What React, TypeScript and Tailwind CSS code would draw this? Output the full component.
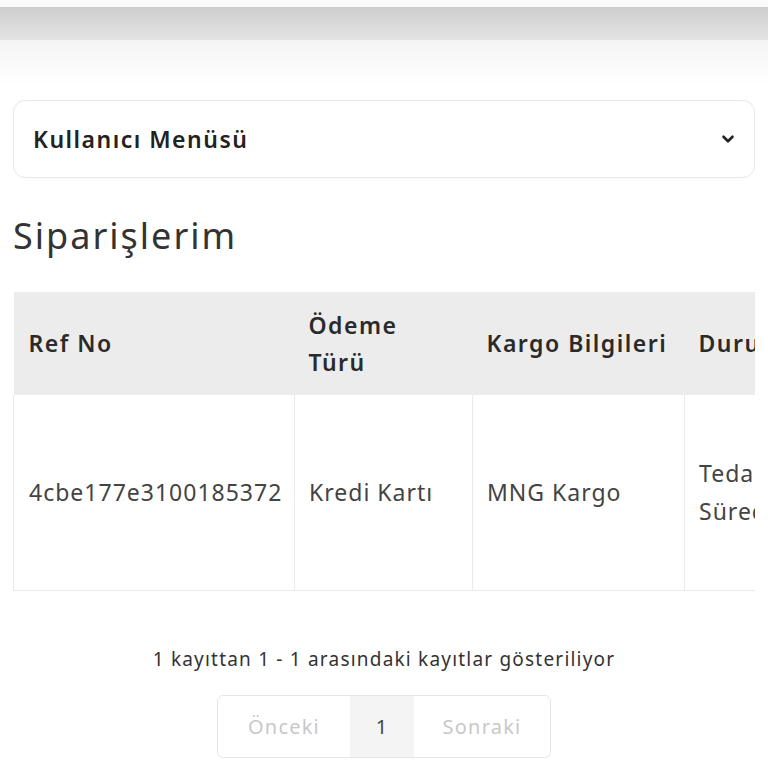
import { ChevronDown } from "lucide-react";

const font = { fontFamily: '"Noto Sans", "Open Sans", sans-serif' };

export default function App() {
  return (
    <div className="min-h-[768px] w-[768px] bg-white text-[#333]" style={font}>
      <div className="h-[7px] bg-[#fafafa]" />
      <div className="h-[33px] bg-gradient-to-b from-[#cdcdcd] to-[#e4e4e4]" />
      <div className="h-[45px] bg-gradient-to-b from-[#f4f4f4] to-white" />

      <div className="mx-[13px] mt-[15px] flex h-[78px] items-center justify-between rounded-[12px] border border-[#e8e8e8] pr-[17px] pl-[19px]">
        <span className="text-[23px] font-semibold tracking-[1.5px] text-[#222]">Kullanıcı Menüsü</span>
        <ChevronDown className="h-[18px] w-[18px] text-[#222]" strokeWidth={3.5} />
      </div>

      <h1 className="mx-[13px] mt-[36px] text-[36px] leading-[44px] font-normal tracking-[2px] text-[#333]">Siparişlerim</h1>

      <div className="mx-[13px] mt-[34px] overflow-hidden">
        <table className="w-[1100px] table-fixed border-collapse text-left">
          <colgroup>
            <col className="w-[281px]" />
            <col className="w-[178px]" />
            <col className="w-[212px]" />
            <col className="w-[150px]" />
            <col className="w-[279px]" />
          </colgroup>
          <thead>
            <tr className="h-[103px] bg-[#ececec] text-[23px] leading-[37px] tracking-[1.5px] text-[#2a2a2a]">
              <th className="px-[15px] font-semibold">Ref No</th>
              <th className="px-[14px] font-semibold">Ödeme Türü</th>
              <th className="px-[14px] font-semibold">Kargo Bilgileri</th>
              <th className="px-[14px] font-semibold">Durum</th>
              <th className="px-[14px] font-semibold">Tutar</th>
            </tr>
          </thead>
          <tbody>
            <tr className="h-[195px] border-b border-[#eaeaea] text-[23px] leading-[38px] tracking-[1px] text-[#444]">
              <td className="border-l border-[#eaeaea] px-[15px]">4cbe177e3100185372</td>
              <td className="border-l border-[#eaeaea] px-[14px]">Kredi Kartı</td>
              <td className="border-l border-[#eaeaea] px-[14px]">MNG Kargo</td>
              <td className="border-l border-[#eaeaea] px-[14px]">Tedarik Sürecinde</td>
              <td className="border-l border-[#eaeaea] px-[14px]">1.250,00 TL</td>
            </tr>
          </tbody>
        </table>
      </div>

      <p className="mt-[54px] text-center text-[19px] tracking-[1.2px] text-[#333]">1 kayıttan 1 - 1 arasındaki kayıtlar gösteriliyor</p>

      <div className="mt-[22px] flex justify-center">
        <div className="flex h-[63px] overflow-hidden rounded-[6px] border border-[#e6e6e6] text-[20px] tracking-[1.2px]">
          <span className="flex w-[132px] items-center justify-center text-[#c8c8c8]">Önceki</span>
          <span className="flex w-[64px] items-center justify-center bg-[#f4f4f4] text-[#444]">1</span>
          <span className="flex w-[136px] items-center justify-center text-[#c8c8c8]">Sonraki</span>
        </div>
      </div>
    </div>
  );
}
